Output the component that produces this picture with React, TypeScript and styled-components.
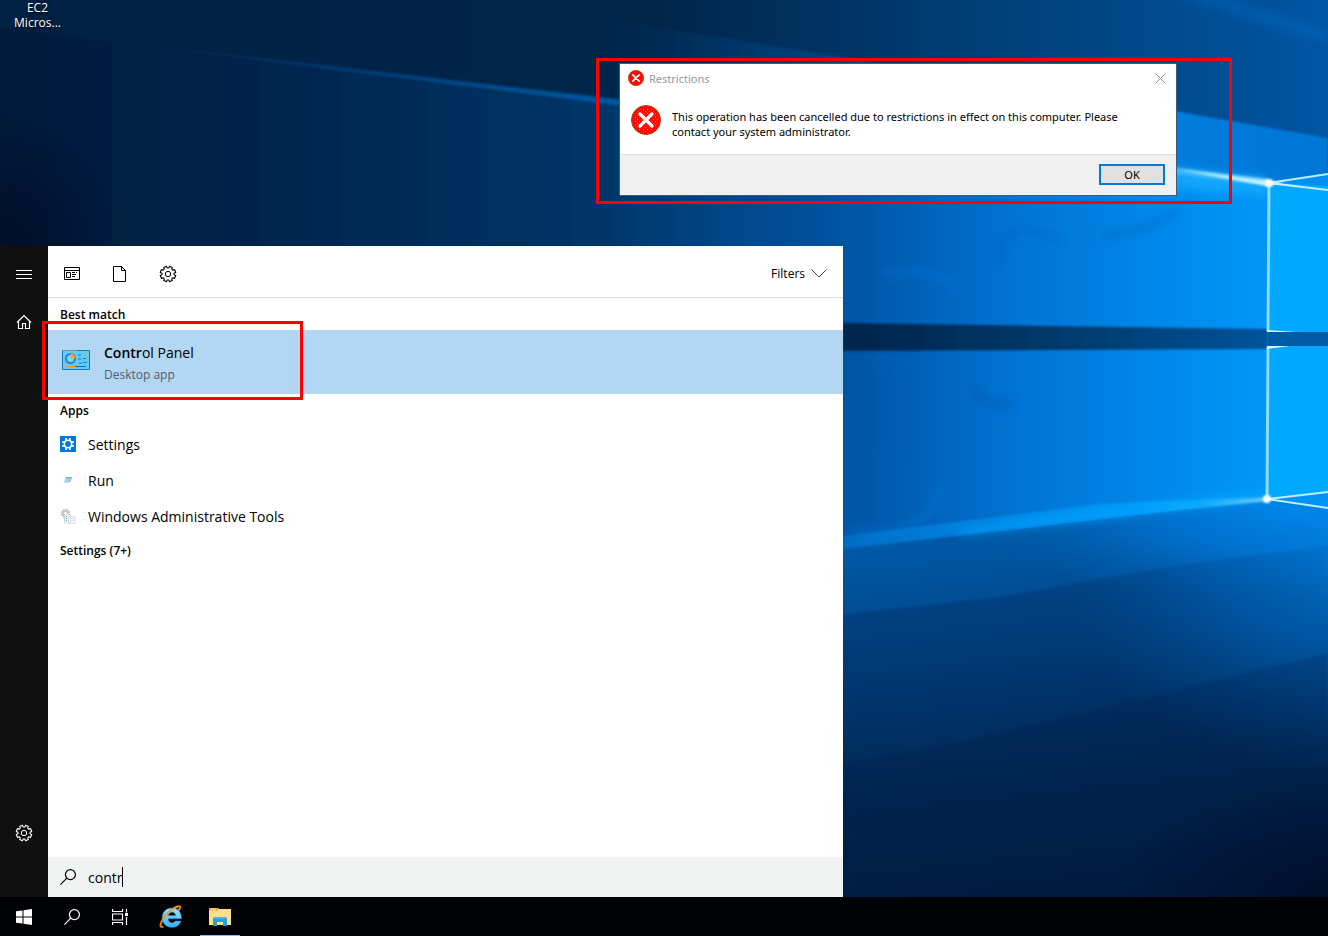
import { useState } from "react";
import styled, { createGlobalStyle } from "styled-components";

const gearPath = (cx: number, cy: number, outer: number, root: number) => {
  const point = (radius: number, deg: number) => {
    const rad = (deg * Math.PI) / 180;
    return `${(cx + radius * Math.sin(rad)).toFixed(2)} ${(cy - radius * Math.cos(rad)).toFixed(2)}`;
  };
  const points: string[] = [];
  for (let i = 0; i < 8; i++) {
    const mid = 22.5 + i * 45;
    points.push(point(root, mid - 15), point(outer, mid - 11), point(outer, mid + 11), point(root, mid + 15));
  }
  return `M${points.join("L")}Z`;
};

function GearIcon() {
  return (
    <svg width="18" height="18" viewBox="0 0 18 18" fill="none" stroke="currentColor" strokeLinejoin="round" aria-hidden="true">
      <path d={gearPath(9, 9, 7.9, 6.1)} strokeWidth="1.1" />
      <circle cx="9" cy="9" r="2.7" />
    </svg>
  );
}

function SearchIcon() {
  return (
    <svg width="16" height="16" viewBox="0 0 16 16" fill="none" stroke="currentColor" strokeWidth="1.2" aria-hidden="true">
      <circle cx="10.4" cy="5.6" r="5" />
      <path d="M6.8 9.2L.4 15.6" />
    </svg>
  );
}

function ErrorIcon({ size }: { size: number }) {
  return (
    <svg width={size} height={size} viewBox="0 0 30 30" aria-hidden="true">
      <defs>
        <pattern id="dots" width="4" height="4" patternUnits="userSpaceOnUse">
          <path d="M0 0h1v1H0zM2 2h1v1H2z" fill="#ff8a3c" />
        </pattern>
      </defs>
      <circle cx="15" cy="15" r="14.5" fill="#fb0d00" stroke="#a5431c" />
      {size > 16 && <circle cx="15" cy="15" r="12" fill="url(#dots)" />}
      <path d="M9 9l12 12M21 9L9 21" stroke="#fb0d00" strokeWidth="6" strokeLinecap="round" />
      <path d="M9 9l12 12M21 9L9 21" stroke="#fff" strokeWidth="3.2" strokeLinecap="round" />
    </svg>
  );
}

function Wallpaper() {
  return (
    <WallpaperSvg viewBox="0 0 1328 897" preserveAspectRatio="xMaxYMid slice" aria-hidden="true">
      <defs>
        <linearGradient id="sky" x1="0" x2="1328" y1="0" y2="0" gradientUnits="userSpaceOnUse">
          <stop offset="0" stopColor="#002041" />
          <stop offset=".5" stopColor="#00264c" />
          <stop offset=".75" stopColor="#004079" />
          <stop offset="1" stopColor="#0055a2" />
        </linearGradient>
        <linearGradient id="slope" x1="600" x2="1328" y1="0" y2="0" gradientUnits="userSpaceOnUse">
          <stop offset="0" stopColor="#003260" stopOpacity="0" />
          <stop offset=".3" stopColor="#00427d" />
          <stop offset=".5" stopColor="#0058a6" />
          <stop offset=".8" stopColor="#007cdc" />
          <stop offset="1" stopColor="#0076d5" />
        </linearGradient>
        <linearGradient id="glow" x1="0" x2="1328" y1="0" y2="0" gradientUnits="userSpaceOnUse">
          <stop offset="0" stopColor="#001c3b" />
          <stop offset=".2" stopColor="#00254d" />
          <stop offset=".45" stopColor="#003567" />
          <stop offset=".64" stopColor="#0055a5" />
          <stop offset=".77" stopColor="#0074d6" />
          <stop offset=".9" stopColor="#008df0" />
          <stop offset="1" stopColor="#009eff" />
        </linearGradient>
        <linearGradient id="floor" x1="1000" x2="1040" y1="520" y2="897" gradientUnits="userSpaceOnUse">
          <stop offset="0" stopColor="#005ba9" />
          <stop offset=".3" stopColor="#00478a" />
          <stop offset=".65" stopColor="#002e5c" />
          <stop offset="1" stopColor="#001b3c" />
        </linearGradient>
        <linearGradient id="beam" x1="80" x2="1268" y1="0" y2="0" gradientUnits="userSpaceOnUse">
          <stop offset="0" stopColor="#0060b0" stopOpacity="0" />
          <stop offset=".4" stopColor="#0060b0" stopOpacity=".7" />
          <stop offset=".85" stopColor="#0098f8" />
          <stop offset="1" stopColor="#d5f6ff" />
        </linearGradient>
        <linearGradient id="lowBeam" x1="843" x2="1268" y1="0" y2="0" gradientUnits="userSpaceOnUse">
          <stop offset="0" stopColor="#0080dc" stopOpacity=".7" />
          <stop offset=".7" stopColor="#00a0ff" />
          <stop offset=".85" stopColor="#25b8ff" />
          <stop offset="1" stopColor="#e4fbff" />
        </linearGradient>
        <linearGradient id="band" x1="843" x2="1328" y1="0" y2="0" gradientUnits="userSpaceOnUse">
          <stop offset="0" stopColor="#00254b" />
          <stop offset=".5" stopColor="#003c70" />
          <stop offset="1" stopColor="#005ba9" />
        </linearGradient>
        <radialGradient id="shade">
          <stop offset="0" stopColor="#000c26" stopOpacity=".9" />
          <stop offset="1" stopColor="#000c26" stopOpacity="0" />
        </radialGradient>
        <radialGradient id="shine">
          <stop offset="0" stopColor="#008cf2" />
          <stop offset=".5" stopColor="#0077d8" stopOpacity=".6" />
          <stop offset="1" stopColor="#0060b4" stopOpacity="0" />
        </radialGradient>
        <filter id="soft1" x="-20%" y="-20%" width="140%" height="140%"><feGaussianBlur stdDeviation="1" /></filter>
        <filter id="soft5" x="-20%" y="-50%" width="140%" height="200%"><feGaussianBlur stdDeviation="5" /></filter>
        <clipPath id="below"><path d="M840 550L1268 500L1328 508V897H840Z" /></clipPath>
      </defs>

      <rect width="1328" height="897" fill="url(#sky)" />
      <path d="M1175 -5L1328 44V30L1215 -5Z" fill="#006ac2" opacity=".45" filter="url(#soft5)" />
      <path d="M600 18L850 58L1180 112L1328 138V200H600Z" fill="url(#slope)" filter="url(#soft1)" />
      <path d="M0 28L600 100L1268 183L1328 190V560H0Z" fill="url(#glow)" filter="url(#soft1)" />
      <ellipse cx="0" cy="250" rx="130" ry="150" fill="url(#shade)" />
      <path d="M80 37L600 97L1268 179V186L600 103Z" fill="url(#beam)" filter="url(#soft1)" />
      <path d="M1000 150L1268 178V196L1000 176Z" fill="#12acff" opacity=".8" filter="url(#soft5)" />

      <g fill="none" strokeWidth="5" opacity=".5" filter="url(#soft5)">
        <path d="M998 270C990 225 1028 222 1058 240M1100 235Q1150 234 1180 208" stroke="#005fbc" />
        <path d="M880 270Q900 278 906 272T958 286" stroke="#007be0" />
        <path d="M975 385C975 405 1000 407 1014 402M877 370V450M906 380V455" stroke="#0053a1" />
        <path d="M848 529C905 542 935 515 942 488" stroke="#0079df" />
      </g>

      <path d="M843 323L1268 329V349L843 351Z" fill="url(#band)" filter="url(#soft1)" />
      <path d="M1268 331H1328V348H1268Z" fill="#005aa6" />

      <path d="M840 550L1268 500L1328 508V897H840Z" fill="url(#floor)" />
      <g clipPath="url(#below)">
        <ellipse cx="1290" cy="510" rx="330" ry="90" fill="url(#shine)" />
        <path d="M840 615L1000 597L1180 565L1328 546V897H840Z" fill="#001b47" opacity=".25" filter="url(#soft1)" />
        <ellipse cx="1370" cy="560" rx="310" ry="220" fill="url(#shine)" opacity=".65" />
        <path d="M960 742L1150 697L1328 653V897H840V765Z" fill="#001b47" opacity=".2" filter="url(#soft1)" />
        <ellipse cx="1360" cy="910" rx="250" ry="150" fill="url(#shade)" />
      </g>
      <path d="M843 536L1100 504L1268 497V501L1100 518L843 549Z" fill="url(#lowBeam)" opacity=".8" filter="url(#soft1)" />
      <path d="M960 530L1268 488V500L960 535Z" fill="#00a5ff" opacity=".7" filter="url(#soft5)" />

      <path d="M1269 183L1328 174V332H1268Z" fill="#00a8ff" />
      <path d="M1268 346H1328V493L1267 499Z" fill="#00a8ff" />
      <path d="M1269 183L1328 174V186Z" fill="#0090f1" />
      <path d="M1267 499L1328 492V508Z" fill="#0093f5" />
      <g fill="none" stroke="#b9efff" strokeWidth="2">
        <path d="M1269 183L1328 174M1269 183L1328 190" />
        <path d="M1267 499L1328 492M1267 499L1328 508" />
        <path d="M1269 183L1268 331M1268 347L1267 499" stroke="#8bdcff" strokeWidth="3" />
      </g>
      <path d="M1267 330L1298 332H1267ZM1267 346H1290L1267 349Z" fill="#d7f8ff" />
      <path d="M1180 170L1268 181L1284 182L1268 186Z" fill="#c3f4ff" filter="url(#soft1)" />
      <circle cx="1269" cy="183" r="4" fill="#fff" filter="url(#soft1)" />
      <circle cx="1267" cy="499" r="4" fill="#fff" filter="url(#soft1)" />
    </WallpaperSvg>
  );
}

const apps = [
  {
    name: "Settings",
    icon: (
      <svg width="16" height="16" viewBox="0 0 16 16" aria-hidden="true">
        <path d="M0 0h16v16H0z" fill="#0078d7" />
        <path d="M6 2v3M10 2v3M6 11v3M10 11v3M2 6h3M2 10h3M11 6h3M11 10h3" stroke="#fff" strokeWidth="1.5" />
        <circle cx="8" cy="8" r="3.7" fill="#0078d7" stroke="#fff" strokeWidth="1.6" />
      </svg>
    ),
  },
  {
    name: "Run",
    icon: (
      <svg width="16" height="16" viewBox="0 0 16 16" aria-hidden="true">
        <path d="M5.500 5H12l-2 5H4z" fill="#b9def3" />
        <path d="M6 5h6l-.5 1.500H5.500zM10.500 6h1.200L10 10H9z" fill="#69b0dc" />
        <path d="M6.500 8H9M4 10h5" stroke="#8ba6b8" strokeWidth=".7" />
      </svg>
    ),
  },
  {
    name: "Windows Administrative Tools",
    icon: (
      <svg width="16" height="16" viewBox="0 0 16 16" aria-hidden="true">
        <path d={gearPath(5.5, 5.5, 5.2, 3.9)} fill="#c9c9c9" />
        <circle cx="5.5" cy="5.5" r="1.6" fill="#fff" />
        <path d="M3.500 5.500L7 9v5H4V8z" fill="#888" />
        <path d="M4.500 6.500h6v8.500h-6zM8.500 8.500h7v7h-7z" fill="#f4f4f4" stroke="#d3d3d3" strokeWidth=".6" />
        <path d="M6.500 8v5" stroke="#3f9ad6" strokeDasharray="1 1" />
        <path d="M10 10.500h4M10 12.500h4" stroke="#dedede" strokeWidth=".7" />
      </svg>
    ),
  },
];

function StartMenu() {
  const [query, setQuery] = useState("contr");

  return (
    <StyledStartMenu>
      <Rail>
        <RailButton aria-label="Menu">
          <svg width="16" height="10" viewBox="0 0 16 10" stroke="currentColor" aria-hidden="true">
            <path d="M0 1.500h16M0 5.500h16M0 9.500h16" />
          </svg>
        </RailButton>
        <RailButton aria-label="Home">
          <svg width="16" height="16" viewBox="0 0 16 16" fill="none" stroke="currentColor" strokeWidth="1.2" aria-hidden="true">
            <path d="M1 8.500L8 1.500l7 7M2.500 7.500v7h4v-5h3v5h4v-7" />
          </svg>
        </RailButton>
        <RailButton aria-label="Settings" $last>
          <GearIcon />
        </RailButton>
      </Rail>
      <Results>
        <Toolbar>
          <ToolButton aria-label="Apps">
            <svg width="16" height="14" viewBox="0 0 16 14" fill="none" stroke="currentColor" aria-hidden="true">
              <path d="M.5.5h15v12H.5zM.5 3.500h15M2.500 5.500h4v5h-4zM8 5.500h3M12 5.500h1M8 7.500h4M8 9.500h3" />
            </svg>
          </ToolButton>
          <ToolButton aria-label="Documents">
            <svg width="14" height="16" viewBox="0 0 14 16" fill="none" stroke="currentColor" aria-hidden="true">
              <path d="M.5.5h8l4 4v11H.5zM8.500.5v4h4" />
            </svg>
          </ToolButton>
          <ToolButton aria-label="Settings">
            <GearIcon />
          </ToolButton>
          <FiltersButton>
            Filters
            <svg width="16" height="9" viewBox="0 0 16 9" fill="none" stroke="#444" aria-hidden="true">
              <path d="M.5.5L8 8L15.500.5" />
            </svg>
          </FiltersButton>
        </Toolbar>
        <GroupTitle>Best match</GroupTitle>
        <BestMatchRow>
          <BestMatch>
            <svg width="28" height="21" viewBox="0 0 28 21" aria-hidden="true">
              <path d="M.5.5h27v19H.5z" fill="#5fcafb" stroke="#1878b8" />
              <path d="M1 .5h14" stroke="#82919b" />
              <circle cx="8.500" cy="8.500" r="4.500" fill="#7fd6fb" stroke="#1c86d2" strokeWidth="2" />
              <path d="M8.500 8.500V3.500a5 5 0 0 1 5 5z" fill="#ff9c2c" />
              <path d="M16 5h3M16 9h3M17 13h3" stroke="#147bc9" strokeWidth="1.200" />
              <path d="M21 5h4" stroke="#ff9c2c" strokeWidth="1.200" />
              <path d="M21 8.500h3M21 12.500h4" stroke="#147bc9" />
              <path d="M4 16.500h9" stroke="#ff9c2c" />
              <path d="M13 16.500h11" stroke="#0c73c6" />
            </svg>
            <div>
              <div className="name">
                <b>Contr</b>ol Panel
              </div>
              <div className="kind">Desktop app</div>
            </div>
          </BestMatch>
          <MatchHighlight />
        </BestMatchRow>
        <GroupTitle>Apps</GroupTitle>
        {apps.map((app) => (
          <AppRow key={app.name}>
            {app.icon}
            {app.name}
          </AppRow>
        ))}
        <GroupTitle>Settings (7+)</GroupTitle>
        <SearchBox>
          <SearchIcon />
          <div>
            <input aria-label="Search" value={query} onChange={(e) => setQuery(e.target.value)} />
            <Caret />
          </div>
        </SearchBox>
      </Results>
    </StyledStartMenu>
  );
}

function RestrictionsDialog() {
  return (
    <DialogHighlight>
      <Dialog role="dialog" aria-labelledby="dialog-title">
        <DialogTitle>
          <ErrorIcon size={16} />
          <span id="dialog-title">Restrictions</span>
          <button aria-label="Close">
            <svg width="11" height="11" viewBox="0 0 11 11" stroke="#8f9296" aria-hidden="true">
              <path d="M.5.5l10 10M10.500.5l-10 10" />
            </svg>
          </button>
        </DialogTitle>
        <DialogBody>
          <ErrorIcon size={30} />
          <p>
            This operation has been cancelled due to restrictions in effect on this computer. Please contact your
            system administrator.
          </p>
        </DialogBody>
        <DialogFooter>
          <button>OK</button>
        </DialogFooter>
      </Dialog>
    </DialogHighlight>
  );
}

function Taskbar() {
  return (
    <StyledTaskbar>
      <TaskButton aria-label="Start">
        <svg width="16" height="16" viewBox="0 0 16 16" fill="#fff" aria-hidden="true">
          <path d="M0 2.300L6.500 1.400V7.500H0zM7.500 1.200L16 0v7.500H7.500zM0 8.500h6.500v6.100L0 13.700zM7.500 8.500H16V16l-8.500-1.200z" />
        </svg>
      </TaskButton>
      <TaskButton aria-label="Search">
        <SearchIcon />
      </TaskButton>
      <TaskButton aria-label="Task View">
        <svg width="17" height="16" viewBox="0 0 17 16" fill="none" stroke="#fff" aria-hidden="true">
          <path d="M.5 0v2.500h10V0M.5 5h10v6H.5zM.5 16v-2.500h10V16M14.500 0v3.500M14.500 8v8" strokeWidth="1.2" />
          <path d="M13 4h3v3h-3z" fill="#fff" stroke="none" />
        </svg>
      </TaskButton>
      <PinnedApps>
        <TaskButton aria-label="Internet Explorer">
          <svg width="24" height="24" viewBox="0 0 24 24" fill="none" aria-hidden="true">
            <defs>
              <linearGradient id="ie" x1="0" y1="0" x2="0" y2="1">
                <stop offset="0" stopColor="#9be0ff" />
                <stop offset="1" stopColor="#31b3f6" />
              </linearGradient>
            </defs>
            <path
              fillRule="evenodd"
              d="M22.500 13.800H9.300c.2 2.600 1.600 4 3.700 4 1.400 0 2.500-.6 3.200-1.800h5.800c-1.300 4.200-4.500 6.400-9 6.400-5.800 0-9.800-3.800-9.800-9.700S7.200 3 13 3s9.600 4 9.500 10.800zM9.400 10.500h7.200c-.2-2.100-1.500-3.300-3.500-3.300s-3.400 1.200-3.700 3.300z"
              fill="url(#ie)"
              stroke="#187fc4"
              strokeWidth=".5"
            />
            <path d="M19.500 5.500C22 2.500 22 .8 19.500 1.300 15 2.100 7.500 8.500 3.500 15c-3 4.800-2.700 7.900.8 6.500" stroke="#dd811d" strokeWidth="2" />
            <path d="M19 1.600C14.500 3 7.500 8.800 3.700 15" stroke="#ffcb6c" strokeWidth=".8" />
          </svg>
        </TaskButton>
        <TaskButton aria-label="File Explorer" $active>
          <svg width="22" height="20" viewBox="0 0 22 20" aria-hidden="true">
            <path d="M0 1h9l1 1h12v16H0z" fill="#ffdf8b" />
            <path d="M0 1h9.500L8.500 3.500H0z" fill="#f59a34" />
            <path d="M2 1.500h5v1H2z" fill="#fff1c9" />
            <path d="M4 19v-7.500L5.500 10h11l1.500 1.500V19h-4v-4H8v4z" fill="#28a0df" />
            <path d="M6 10.500h10v1H6z" fill="#6bc7f3" />
          </svg>
        </TaskButton>
      </PinnedApps>
    </StyledTaskbar>
  );
}

function App() {
  return (
    <Desktop>
      <GlobalStyle />
      <Workspace>
        <Wallpaper />
        <DesktopIcons>
          <DesktopIcon>EC2 Micros...</DesktopIcon>
        </DesktopIcons>
        <StartMenu />
        <RestrictionsDialog />
      </Workspace>
      <Taskbar />
    </Desktop>
  );
}

const GlobalStyle = createGlobalStyle`
  * {
    box-sizing: border-box;
  }
  body {
    margin: 0;
    font-family: "Open Sans", "Noto Sans", sans-serif;
    font-size: 12px;
    color: #000;
  }
  button, input {
    font: inherit;
    color: inherit;
    border: 0;
    padding: 0;
    background: none;
  }
  svg {
    flex: none;
  }
`;

const Desktop = styled.div`
  display: flex;
  flex-direction: column;
  min-height: 100vh;
`;

const Workspace = styled.main`
  position: relative;
  flex: 1;
  display: flex;
  flex-direction: column;
  overflow: hidden;
  isolation: isolate;
  background: #00264c;
`;

const WallpaperSvg = styled.svg`
  position: absolute;
  inset: 0;
  z-index: -1;
  width: 100%;
  height: 100%;
`;

const DesktopIcons = styled.div`
  height: 246px;
`;

const DesktopIcon = styled.div`
  width: 75px;
  padding: 0 12px;
  line-height: 15px;
  text-align: center;
  color: #fff;
  text-shadow: 1px 1px 2px #000;
`;

const StyledStartMenu = styled.section`
  flex: 1;
  display: flex;
  margin-right: 485px;
  background: #fff;
`;

const Rail = styled.nav`
  display: flex;
  flex-direction: column;
  width: 48px;
  padding: 4px 0 40px;
  background: #101010;
  color: #fff;
`;

const RailButton = styled.button<{ $last?: boolean }>`
  display: flex;
  align-items: center;
  justify-content: center;
  height: 48px;
  margin-top: ${({ $last }) => ($last ? "auto" : "0")};
`;

const Results = styled.div`
  flex: 1;
  display: flex;
  flex-direction: column;
`;

const Toolbar = styled.div`
  display: flex;
  height: 52px;
  padding: 4px 16px 0 0;
  border-bottom: 1px solid #dcdcdc;
`;

const ToolButton = styled.button`
  display: flex;
  align-items: center;
  justify-content: center;
  width: 48px;
`;

const FiltersButton = styled.button`
  display: flex;
  align-items: center;
  gap: 6px;
  margin-left: auto;
`;

const GroupTitle = styled.h2`
  margin: 0;
  padding: 2px 0 0 12px;
  font-size: 12px;
  font-weight: 600;
  line-height: 30px;
`;

const BestMatchRow = styled.div`
  position: relative;
`;

const BestMatch = styled.button`
  display: flex;
  gap: 14px;
  width: 100%;
  height: 64px;
  padding: 0 14px;
  background: #b3d6f2;
  text-align: left;
  svg {
    margin-top: 20px;
  }
  .name {
    margin-top: 11px;
    font-size: 14px;
    line-height: 24px;
    b {
      font-weight: 600;
    }
  }
  .kind {
    line-height: 20px;
    color: #4f5f6c;
  }
`;

// red marker around the best match, hanging over the row's edges
const MatchHighlight = styled.div`
  position: absolute;
  top: -9px;
  bottom: -6px;
  left: -6px;
  width: 261px;
  border: 3px solid #fe0000;
  pointer-events: none;
`;

const AppRow = styled.button`
  display: flex;
  align-items: center;
  gap: 12px;
  height: 36px;
  padding-left: 12px;
  font-size: 14px;
`;

const SearchBox = styled.label`
  display: flex;
  align-items: center;
  gap: 12px;
  height: 40px;
  margin-top: auto;
  padding: 0 12px;
  background: #f1f3f3;
  font-size: 14px;
  div {
    display: flex;
  }
  input {
    field-sizing: content;
    outline: none;
    caret-color: transparent;
  }
`;

const Caret = styled.span`
  width: 1px;
  height: 20px;
  background: #000;
`;

const DialogHighlight = styled.div`
  position: absolute;
  top: 58px;
  right: 96px;
  width: 636px;
  padding: 2px 52px 5px 20px;
  border: 3px solid #fe0000;
`;

const Dialog = styled.div`
  border: 1px solid #3d5c7c;
  background: #fff;
  font-family: "Noto Sans", "Open Sans", sans-serif;
  font-size: 11px;
`;

const DialogTitle = styled.header`
  display: flex;
  align-items: center;
  gap: 5px;
  height: 30px;
  padding: 0 10px 2px 8px;
  color: #8f9a9e;
  button {
    display: flex;
    margin-left: auto;
  }
`;

const DialogBody = styled.div`
  display: flex;
  gap: 11px;
  height: 60px;
  padding: 11px 40px 0 11px;
  p {
    margin: 4px 0 0;
    line-height: 15px;
  }
`;

const DialogFooter = styled.footer`
  display: flex;
  justify-content: flex-end;
  padding: 9px 11px 10px;
  border-top: 1px solid #dfdfdf;
  background: #f0f0f0;
  button {
    width: 66px;
    height: 21px;
    border: 2px solid #0078d7;
    background: #e1e1e1;
    line-height: 17px;
  }
`;

const StyledTaskbar = styled.footer`
  display: flex;
  height: 39px;
  background: #000206;
  color: #fff;
`;

const TaskButton = styled.button<{ $active?: boolean }>`
  position: relative;
  display: flex;
  align-items: center;
  justify-content: center;
  width: 48px;
  &::after {
    content: "";
    display: ${({ $active }) => ($active ? "block" : "none")};
    position: absolute;
    right: 4px;
    bottom: 0;
    left: 4px;
    height: 1px;
    background: #83bfe2;
  }
`;

const PinnedApps = styled.div`
  display: flex;
  gap: 1px;
  padding-left: 3px;
`;

export default App;
